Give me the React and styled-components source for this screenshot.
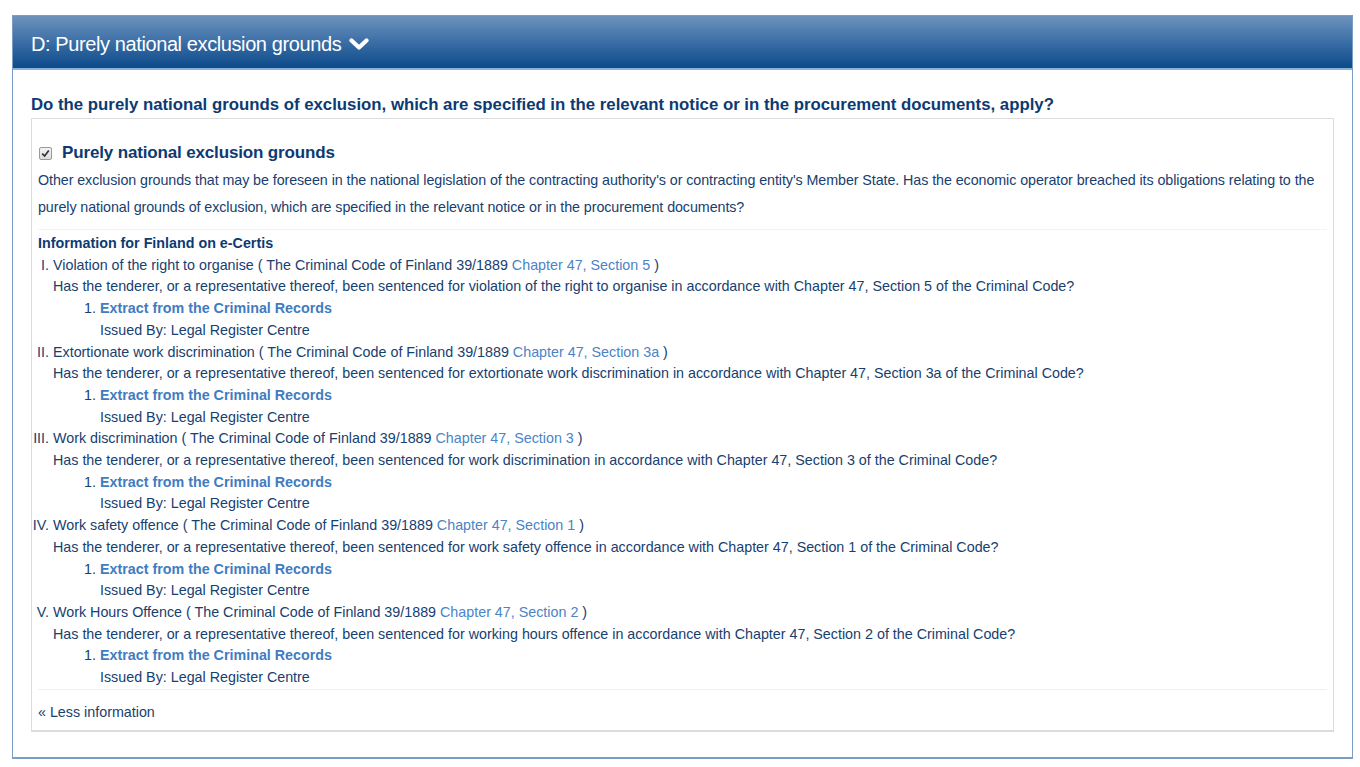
import React from 'react'
import styled, { createGlobalStyle } from 'styled-components'

const Global = createGlobalStyle`
  html, body {
    margin: 0;
    padding: 0;
    background: #fff;
  }
  body {
    font-family: 'Liberation Sans', Arial, sans-serif;
    color: #17406f;
  }
`

const Page = styled.div`
  padding: 15px 7px 8px 12px;
`

const Panel = styled.section`
  border: 1px solid #7b9cc3;
  border-bottom-width: 2px;
  box-sizing: border-box;
`

const PanelHeader = styled.div`
  height: 54px;
  box-sizing: border-box;
  display: flex;
  align-items: center;
  gap: 8px;
  padding: 4px 18px 0 18px;
  background: linear-gradient(to bottom, #6d93bd 0%, #3b6ea6 50%, #0b4a8a 100%);
  border-bottom: 2px solid #8fb0d6;
  color: #fff;
  font-size: 20px;
  letter-spacing: -0.4px;
`

const PanelBody = styled.div`
  padding: 25px 18px 25px 18px;
`

const Question = styled.h3`
  margin: 0 0 3px 0;
  font-size: 16.8px;
  font-weight: bold;
  color: #0c3a72;
`

const Box = styled.div`
  border: 1px solid #dcdcdc;
  border-bottom-width: 2px;
  padding: 24px 6px 0 6px;
`

const CheckRow = styled.label`
  display: flex;
  align-items: center;
  gap: 10px;
  padding-left: 1px;
  font-size: 17px;
  font-weight: bold;
  color: #0c3a72;
  letter-spacing: -0.15px;
`

const Tick = styled.span`
  width: 13px;
  height: 13px;
  box-sizing: border-box;
  border: 1px solid #9a9a9a;
  border-radius: 2px;
  background: linear-gradient(#f4f4f4, #dcdcdc);
  display: flex;
  align-items: center;
  justify-content: center;
`

const Description = styled.p`
  margin: 4px 0 8px 0;
  font-size: 14.3px;
  line-height: 27px;
  letter-spacing: -0.08px;
`

const Certis = styled.div`
  border-top: 1px solid #f3f3f3;
  border-bottom: 1px solid #f0f0f0;
  padding: 3px 0 0 0;
  font-size: 14.3px;
  line-height: 21.7px;
`

const CertisTitle = styled.div`
  font-weight: bold;
  color: #0c3a72;
`

const Grounds = styled.ol`
  list-style: upper-roman;
  margin: 0;
  padding-left: 15px;
`

const Evidence = styled.ol`
  list-style: decimal;
  margin: 0;
  padding-left: 47px;
`

const Link = styled.a`
  color: ${p => (p.$strong ? '#3f7cc0' : '#4a84c6')};
  font-weight: ${p => (p.$strong ? 'bold' : 'normal')};
  text-decoration: none;
`

const Less = styled.div`
  padding: 14px 0 10px 0;
  font-size: 14.3px;
`

const grounds = [
  {
    name: 'Violation of the right to organise',
    section: '5',
    question: 'violation of the right to organise'
  },
  {
    name: 'Extortionate work discrimination',
    section: '3a',
    question: 'extortionate work discrimination'
  },
  { name: 'Work discrimination', section: '3', question: 'work discrimination' },
  { name: 'Work safety offence', section: '1', question: 'work safety offence' },
  { name: 'Work Hours Offence', section: '2', question: 'working hours offence' }
]

const Chevron = () => (
  <svg width="20" height="16" viewBox="0 0 20 16">
    <path d="M2.5 4.5 L10 11.5 L17.5 4.5" fill="none" stroke="#fff" strokeWidth="4.2" strokeLinecap="round" strokeLinejoin="round" />
  </svg>
)

const Check = () => (
  <svg width="9" height="9" viewBox="0 0 9 9">
    <path d="M1.2 4.6 L3.6 7 L7.8 1.6" fill="none" stroke="#333" strokeWidth="1.7" />
  </svg>
)

export default function App() {
  return (
    <Page>
      <Global />
      <Panel>
        <PanelHeader>
          D: Purely national exclusion grounds <Chevron />
        </PanelHeader>
        <PanelBody>
          <Question>
            Do the purely national grounds of exclusion, which are specified in the relevant notice or in the
            procurement documents, apply?
          </Question>
          <Box>
            <CheckRow>
              <Tick>
                <Check />
              </Tick>
              Purely national exclusion grounds
            </CheckRow>
            <Description>
              Other exclusion grounds that may be foreseen in the national legislation of the contracting
              authority's or contracting entity's Member State. Has the economic operator breached its obligations
              relating to the purely national grounds of exclusion, which are specified in the relevant notice or in
              the procurement documents?
            </Description>
            <Certis>
              <CertisTitle>Information for Finland on e-Certis</CertisTitle>
              <Grounds>
                {grounds.map(g => (
                  <li key={g.name}>
                    {g.name} ( The Criminal Code of Finland 39/1889{' '}
                    <Link href="#">Chapter 47, Section {g.section}</Link> )
                    <div>
                      Has the tenderer, or a representative thereof, been sentenced for {g.question} in accordance
                      with Chapter 47, Section {g.section} of the Criminal Code?
                    </div>
                    <Evidence>
                      <li>
                        <Link href="#" $strong>
                          Extract from the Criminal Records
                        </Link>
                        <div>Issued By: Legal Register Centre</div>
                      </li>
                    </Evidence>
                  </li>
                ))}
              </Grounds>
            </Certis>
            <Less>« Less information</Less>
          </Box>
        </PanelBody>
      </Panel>
    </Page>
  )
}
